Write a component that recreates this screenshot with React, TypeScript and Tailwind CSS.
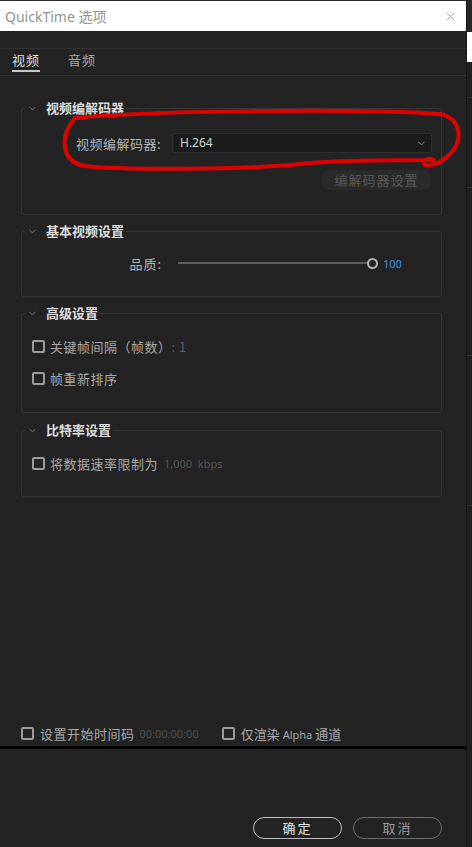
import { ChevronDown, X } from 'lucide-react';

const font = { fontFamily: '"Noto Sans CJK SC", "Noto Sans", sans-serif' };
const latin = { fontFamily: '"Noto Sans", sans-serif' };

function Box() {
  return <span className="inline-block w-[13px] h-[13px] shrink-0 rounded-[2px] border-2 border-[#9c9c9c]" />;
}

function Section({ title, children }: { title: string; children: React.ReactNode }) {
  return (
    <fieldset className="ml-[21px] mr-[24px] border border-[#363636] rounded-[3px] min-w-0">
      <legend className="ml-[3px] px-[2px] flex items-center h-[16px]">
        <ChevronDown size={11} strokeWidth={1.5} className="text-[#9a9a9a] mr-[8px]" />
        <span className="text-[13px] font-bold text-[#dcdcdc] leading-[16px]">{title}</span>
      </legend>
      {children}
    </fieldset>
  );
}

export default function App() {
  return (
    <div className="relative flex w-[472px] h-[847px] bg-[#232323] overflow-hidden" style={font}>
      <div className="w-[466px] flex flex-col">
        <div className="h-[1px] bg-[#2c2c2c]" />
        <div className="h-[30px] bg-white flex items-center justify-between pl-[5px] pr-[8px]">
          <span className="text-[14px] text-[#929292] leading-none" style={latin}>
            QuickTime <span style={font}>选项</span>
          </span>
          <X size={15} strokeWidth={1} className="text-[#808080]" />
        </div>

        <div className="h-[17px]" />
        <div className="border-t border-b border-[#333] h-[28px] flex items-end gap-[28px] pl-[12px]">
          <div className="flex flex-col items-center">
            <span className="text-[13px] text-[#dedede] leading-[16px] tracking-[1px]">视频</span>
            <span className="mt-[2px] mb-[3px] h-[2px] w-[28px] bg-[#c8c8c8]" />
          </div>
          <div className="flex flex-col items-center">
            <span className="text-[13px] text-[#a8a8a8] leading-[16px] tracking-[1px]">音频</span>
            <span className="mt-[2px] mb-[3px] h-[2px] w-[28px]" />
          </div>
        </div>

        <div className="h-[24px]" />
        <Section title="视频编解码器">
          <div className="flex items-center mt-[17px]">
            <span className="w-[150px] text-right pr-[11px] text-[13px] text-[#b4b4b4] leading-none tracking-[0.5px]">
              视频编解码器:
            </span>
            <div className="w-[260px] h-[20px] bg-[#1b1b1b] border border-[#2f2f2f] rounded-[2px] flex items-center justify-between pl-[7px] pr-[4px]">
              <span className="text-[12px] text-[#d2d2d2] leading-none" style={latin}>H.264</span>
              <ChevronDown size={11} strokeWidth={1.5} className="text-[#bbb]" />
            </div>
          </div>
          <div className="flex justify-end pr-[9px] mt-[17px] mb-[24px]">
            <span className="w-[111px] h-[20px] rounded-full bg-[#2a2a2a] flex items-center justify-center text-[13px] text-[#585858] tracking-[1px]">
              编解码器设置
            </span>
          </div>
        </Section>

        <div className="h-[8px]" />
        <Section title="基本视频设置">
          <div className="flex items-center mt-[16px] mb-[25px] h-[16px]">
            <span className="w-[150px] text-right pr-[10px] text-[13px] text-[#b4b4b4] leading-none tracking-[1px]">品质:</span>
            <div className="ml-[6px] w-[189px] h-[2px] bg-[#5c5c5c]" />
            <span className="w-[11px] h-[11px] rounded-full border-2 border-[#b4b4b4] bg-[#232323]" />
            <span className="ml-[5px] text-[11px] text-[#3f8fe0] leading-none" style={latin}>100</span>
          </div>
        </Section>

        <div className="h-[8px]" />
        <Section title="高级设置">
          <div className="flex flex-col gap-[16px] pl-[10px] mt-[17px] mb-[26px]">
            <div className="flex items-center gap-[5px] h-[16px]">
              <Box />
              <span className="text-[13px] text-[#a8a8a8] leading-none tracking-[0.5px]">
                关键帧间隔（帧数）<span className="text-[#5e5e5e]">: 1</span>
              </span>
            </div>
            <div className="flex items-center gap-[5px] h-[16px]">
              <Box />
              <span className="text-[13px] text-[#a8a8a8] leading-none tracking-[0.5px]">帧重新排序</span>
            </div>
          </div>
        </Section>

        <div className="h-[9px]" />
        <Section title="比特率设置">
          <div className="flex items-center gap-[5px] h-[16px] pl-[10px] mt-[17px] mb-[25px]">
            <Box />
            <span className="text-[13px] text-[#a8a8a8] leading-none tracking-[0.5px]">将数据速率限制为</span>
            <span className="ml-[1px] text-[11px] text-[#555] leading-none" style={latin}>
              1,000&nbsp;&nbsp;kbps
            </span>
          </div>
        </Section>

        <div className="flex-1" />
        <div className="flex items-center h-[16px] pl-[21px]">
          <Box />
          <span className="ml-[6px] text-[13px] text-[#a8a8a8] leading-none tracking-[0.5px]">设置开始时间码</span>
          <span className="ml-[5px] text-[11px] text-[#4e4e4e] leading-none" style={latin}>
            00:00:00:00
          </span>
          <span className="ml-[23px] flex">
            <Box />
          </span>
          <span className="ml-[6px] text-[13px] text-[#a8a8a8] leading-none">
            仅渲染 <span className="text-[11px]" style={latin}>Alpha</span> 通道
          </span>
        </div>
        <div className="h-[5px]" />
        <div className="h-[3px] bg-black" />
        <div className="h-[68px]" />
        <div className="flex justify-end gap-[11px] pr-[24px] mb-[8px]">
          <span className="w-[89px] h-[22px] rounded-full border border-[#bdbdbd] flex items-center justify-center text-[13px] text-[#e6e6e6] tracking-[2px]">
            确定
          </span>
          <span className="w-[89px] h-[22px] rounded-full border border-[#6e6e6e] flex items-center justify-center text-[13px] text-[#9c9c9c] tracking-[2px]">
            取消
          </span>
        </div>
      </div>

      <div className="flex-1 flex flex-col bg-[#1f1f1f] border-l border-[#141414]">
        <div className="h-[32px] bg-[#262626]" />
        <div className="h-[30px] bg-white" />
        <div className="h-[36px] border-b border-[#333]" />
        <div className="h-[90px] border-b border-[#333]" />
        <div className="h-[168px] border-b border-[#333]" />
        <div className="h-[150px] border-b border-[#333]" />
        <div className="flex-1" />
      </div>

      <svg className="absolute inset-0 pointer-events-none" width="472" height="847" viewBox="0 0 472 847">
        <path
          d="M 75 118 C 140 111, 360 108, 440 114 C 462 118, 464 142, 448 156 C 440 163, 432 166, 425 165 C 420 160, 428 157, 434 160 C 400 160, 330 160, 300 164 C 240 170, 120 170, 85 166 C 62 162, 58 138, 75 118 Z"
          fill="none"
          stroke="#e00000"
          strokeWidth="4"
          strokeLinecap="round"
          strokeLinejoin="round"
        />
      </svg>
    </div>
  );
}
